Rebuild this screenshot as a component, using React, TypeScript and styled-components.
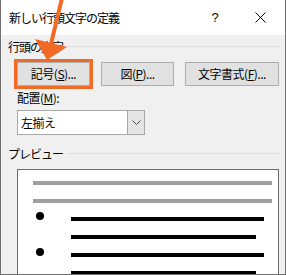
import React from "react"
import styled, { createGlobalStyle } from "styled-components"

const GlobalStyle = createGlobalStyle`
  html, body {
    margin: 0;
    padding: 0;
    background: #ffffff;
  }
  body {
    font-family: "Noto Sans CJK JP", "Noto Sans", sans-serif;
    font-size: 12px;
    color: #000;
  }
`

const Accent = "#f26b26"

const Window = styled.div`
  position: relative;
  width: 286px;
  height: 275px;
  box-sizing: border-box;
  border: 1px solid #707070;
  border-top: none;
  overflow: hidden;
  display: flex;
  flex-direction: column;
  background: #f0f0f0;
`

const TitleBar = styled.div`
  height: 35px;
  flex-shrink: 0;
  background: #fff;
  display: flex;
  align-items: center;
  padding: 0 0 0 8px;
`

const Title = styled.div`
  flex: 1;
  font-size: 12px;
  line-height: 14px;
  letter-spacing: -1px;
`

const Help = styled.div`
  width: 44px;
  text-align: center;
  font-family: "Liberation Sans", sans-serif;
  font-size: 13px;
  line-height: 14px;
  margin-right: 0;
`

const Close = styled.div`
  width: 46px;
  display: flex;
  justify-content: center;
  margin-right: 2px;
`

const Content = styled.div`
  flex: 1;
  display: flex;
  flex-direction: column;
  padding: 0 6px 0 7px;
`

const GroupHeader = styled.div<{ $top?: number }>`
  display: flex;
  align-items: center;
  gap: 4px;
  height: 22px;
  margin-top: ${p => p.$top ?? 0}px;
  letter-spacing: -1px;
  &::after {
    content: "";
    flex: 1;
    height: 1px;
    background: #dcdcdc;
  }
`

const Indent = styled.div`
  display: flex;
  flex-direction: column;
  padding-left: 9px;
`

const ButtonRow = styled.div`
  display: flex;
  gap: 11px;
  margin-top: 5px;
`

const Button = styled.button<{ $width: number; $highlight?: boolean }>`
  width: ${p => p.$width}px;
  height: 24px;
  box-sizing: border-box;
  background: #e1e1e1;
  border: 1px solid #adadad;
  font-family: inherit;
  font-size: 12px;
  line-height: 14px;
  padding: 0;
  color: #000;
  letter-spacing: -0.5px;
  outline: ${p => (p.$highlight ? `3px solid ${Accent}` : "none")};
  outline-offset: 0;
`

const Label = styled.div`
  margin-top: 5px;
  line-height: 14px;
  letter-spacing: -0.5px;
`

const Select = styled.div`
  margin-top: 5px;
  width: 128px;
  height: 25px;
  box-sizing: border-box;
  border: 1px solid #a8a8a8;
  background: #fff;
  display: flex;
  align-items: stretch;
`

const SelectValue = styled.div`
  flex: 1;
  display: flex;
  align-items: center;
  padding-left: 3px;
  letter-spacing: -0.5px;
`

const SelectToggle = styled.div`
  width: 16px;
  border-left: 1px solid #a8a8a8;
  background: #e5e5e5;
  display: flex;
  align-items: center;
  justify-content: center;
`

const Preview = styled.div`
  margin-top: 5px;
  flex: 1;
  box-sizing: border-box;
  border: 1px solid #6d6d6d;
  border-bottom: none;
  background: #fff;
  display: flex;
  flex-direction: column;
  gap: 14px;
  padding: 11px 6px 0 15px;
`

const Rule = styled.div<{ $width?: number }>`
  height: 4px;
  background: #a0a0a0;
  width: ${p => (p.$width ? `${p.$width}px` : "auto")};
`

const TextRow = styled.div`
  display: flex;
  height: 4px;
  padding-left: 3px;
`

const BulletSlot = styled.div`
  width: 35px;
  flex-shrink: 0;
`

const Bullet = styled.div`
  width: 8px;
  height: 8px;
  margin-top: -5px;
  border-radius: 50%;
  background: #000;
`

const TextLine = styled.div<{ $width: number }>`
  width: ${p => p.$width}px;
  height: 4px;
  background: #000;
`

const ArrowLayer = styled.svg`
  position: absolute;
  left: 0;
  top: 0;
  pointer-events: none;
`

const U = styled.span`
  text-decoration: underline;
  text-underline-offset: 1px;
`

export default function App() {
  const lines = [
    { bullet: true, width: 193 },
    { bullet: false, width: 185 },
    { bullet: true, width: 193 },
    { bullet: false, width: 185 },
  ]

  return (
    <>
      <GlobalStyle />
      <Window>
        <TitleBar>
          <Title>新しい行頭文字の定義</Title>
          <Help>?</Help>
          <Close>
            <svg width="11" height="11" viewBox="0 0 11 11">
              <path d="M0.5 0.5 L10.5 10.5 M10.5 0.5 L0.5 10.5" stroke="#000" strokeWidth="1" />
            </svg>
          </Close>
        </TitleBar>
        <Content>
          <GroupHeader>行頭の文字</GroupHeader>
          <Indent>
            <ButtonRow>
              <Button $width={73} $highlight>
                記号(<U>S</U>)...
              </Button>
              <Button $width={73}>
                図(<U>P</U>)...
              </Button>
              <Button $width={94}>
                文字書式(<U>F</U>)...
              </Button>
            </ButtonRow>
            <Label>
              配置(<U>M</U>):
            </Label>
            <Select>
              <SelectValue>左揃え</SelectValue>
              <SelectToggle>
                <svg width="9" height="5" viewBox="0 0 9 5">
                  <path d="M0.5 0.5 L4.5 4.5 L8.5 0.5" stroke="#444" strokeWidth="1" fill="none" />
                </svg>
              </SelectToggle>
            </Select>
          </Indent>
          <GroupHeader $top={7}>プレビュー</GroupHeader>
          <Indent>
            <Preview>
              <Rule />
              <Rule />
              {lines.map((l, i) => (
                <TextRow key={i}>
                  <BulletSlot>{l.bullet && <Bullet />}</BulletSlot>
                  <TextLine $width={l.width} />
                </TextRow>
              ))}
            </Preview>
          </Indent>
        </Content>
        <ArrowLayer width="286" height="275" viewBox="0 0 286 275">
          <line x1="61" y1="-2" x2="50" y2="44" stroke={Accent} strokeWidth="4" />
          <polygon points="34,39 66,47 46,60" fill={Accent} />
        </ArrowLayer>
      </Window>
    </>
  )
}
